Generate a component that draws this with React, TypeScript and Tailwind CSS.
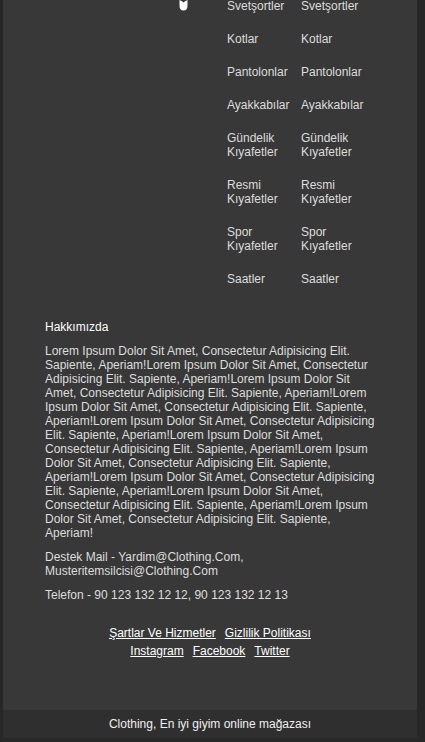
import React from "react";

const categories = [
  "Svetşortler",
  "Kotlar",
  "Pantolonlar",
  "Ayakkabılar",
  "Gündelik Kıyafetler",
  "Resmi Kıyafetler",
  "Spor Kıyafetler",
  "Saatler",
];

const lorem =
  "Lorem Ipsum Dolor Sit Amet, Consectetur Adipisicing Elit. Sapiente, Aperiam!";

function CategoryList() {
  return (
    <ul className="w-[74px] pr-[6px]">
      {categories.map((c) => (
        <li key={c} className="mb-[19px] text-[#dddddd]">
          {c}
        </li>
      ))}
    </ul>
  );
}

export default function App() {
  return (
    <div className="min-h-screen bg-[#272727] pt-[2px] pl-[3px] font-['Liberation_Sans',Arial,sans-serif] text-[12px] leading-[14px]">
      <div className="w-[414px] bg-[#383838]">
        <div className="-mt-[3px] flex">
          <div className="w-[224px] pl-[176px] pt-[1px]">
            <svg width="9" height="11" viewBox="0 0 9 11">
              <path
                d="M0.5 0 L3 1.2 L4.5 2.5 L6 1.2 L8.5 0 L8.5 5.5 Q8.5 10.5 4.5 10.5 Q0.5 10.5 0.5 5.5 Z"
                fill="#ffffff"
              />
            </svg>
          </div>
          <CategoryList />
          <CategoryList />
        </div>

        <div className="px-[42px] pt-[15px]">
          <h3 className="mb-[10px] text-white">Hakkımızda</h3>
          <p className="mb-[10px] text-[#dddddd]">
            {Array(10).fill(lorem).join("")}
          </p>
          <p className="mb-[10px] text-[#dddddd]">
            Destek Mail - Yardim@Clothing.Com, Musteritemsilcisi@Clothing.Com
          </p>
          <p className="text-[#dddddd]">
            Telefon - 90 123 132 12 12, 90 123 132 12 13
          </p>

          <div className="mx-auto mt-[24px] flex w-[240px] flex-wrap justify-center gap-x-[9px] gap-y-[4px] pb-[52px]">
            <a href="#" className="text-white underline">
              Şartlar Ve Hizmetler
            </a>
            <a href="#" className="text-white underline">
              Gizlilik Politikası
            </a>
            <a href="#" className="text-white underline">
              Instagram
            </a>
            <a href="#" className="text-white underline">
              Facebook
            </a>
            <a href="#" className="text-white underline">
              Twitter
            </a>
          </div>
        </div>

        <div className="flex h-[28px] items-center justify-center bg-[#2f2f2f] text-[#f0f0f0]">
          Clothing, En iyi giyim online mağazası
        </div>
      </div>
    </div>
  );
}
